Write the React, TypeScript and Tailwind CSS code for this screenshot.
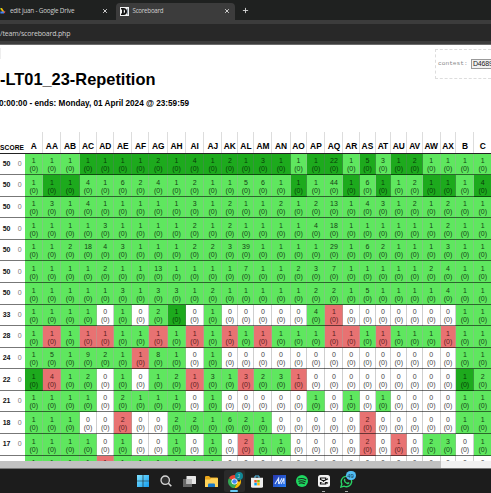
import React from "react";

const columns = "A AA AB AC AD AE AF AG AH AI AJ AK AL AM AN AO AP AQ AR AS AT AU AV AW AX B C".split(" ");

// Each entry is a try count; the prefix gives the state: d = first solved, r = wrong, w = untried.
const rows: [string, string][] = [
  ["50", "1 1 1 d1 d1 d1 d1 d2 d1 d4 d1 d2 d1 d3 d1 1 d1 d22 1 d5 3 d1 d2 1 1 1 1"],
  ["50", "1 d1 d1 4 1 6 2 4 1 2 1 1 5 6 1 d1 1 44 d1 6 d1 1 2 d1 d1 1 d4"],
  ["50", "1 3 1 4 1 1 1 1 1 3 1 2 1 1 2 1 2 13 1 4 3 1 2 1 2 1 1"],
  ["50", "1 1 1 1 3 1 1 1 1 2 1 2 1 1 1 1 4 18 1 1 1 1 1 1 2 1 1"],
  ["50", "1 1 2 18 4 3 1 1 1 2 2 3 39 1 1 1 1 29 1 6 2 1 1 1 3 1 1"],
  ["50", "1 1 1 1 2 1 1 13 1 1 1 1 7 1 1 2 3 7 1 1 1 1 1 2 4 1 1"],
  ["50", "1 1 1 1 1 3 1 3 3 1 2 1 1 1 1 1 2 2 1 5 1 1 1 1 4 1 1"],
  ["33", "1 1 1 1 w0 1 w0 2 d1 w0 1 w0 w0 w0 w0 w0 4 r1 w0 w0 w0 w0 w0 w0 w0 1 1"],
  ["28", "1 r1 1 r1 r1 1 1 r1 1 r1 1 r1 1 r1 1 1 1 r1 r1 1 r1 1 1 1 r1 1 1"],
  ["24", "1 5 1 9 2 1 r1 8 1 w0 1 w0 w0 w0 w0 w0 w0 w0 w0 w0 w0 w0 w0 w0 w0 1 1"],
  ["22", "d1 r4 1 2 w0 1 w0 1 2 r1 3 1 r3 2 3 r1 w0 w0 w0 w0 w0 w0 w0 w0 w0 d1 2"],
  ["21", "1 1 1 1 w0 2 1 1 1 w0 1 w0 w0 w0 w0 w0 1 w0 1 w0 1 w0 w0 w0 w0 1 1"],
  ["18", "1 1 1 w0 w0 r2 w0 w0 2 2 1 6 2 1 w0 w0 w0 w0 w0 r2 w0 w0 w0 w0 w0 1 1"],
  ["17", "1 1 1 1 w0 1 w0 w0 1 w0 1 w0 r2 1 1 w0 w0 w0 w0 r2 w0 r1 w0 2 3 w0 1"],
  ["16", "1 1 1 1 r1 1 1 1 1 1 1 w0 w0 w0 w0 w0 w0 w0 w0 w0 w0 w0 w0 w0 w0 w0 w0"],
];

const gridCols =
  "grid w-[492px] grid-cols-[14.3px_11px_18px_18.2px_18.2px_17.8px_16.5px_18.5px_17px_18.5px_18px_18.3px_18px_16.2px_16px_18px_18.2px_16.8px_18px_18px_16.5px_16px_15px_16.5px_15.5px_17.7px_15.8px_18px_17.7px]";

function cellTone(entry: string) {
  switch (entry[0]) {
    case "d":
      return "bg-[#1daa1d] border-[#36983a] text-[#083c08]";
    case "r":
      return "bg-[#e87272] border-[#c98b86] text-[#5a1c1c]";
    case "w":
      return "bg-white border-[#cfcfcf] text-[#444]";
    default:
      return "bg-[#5fe75f] border-[#7bce7b] text-[#153f15]";
  }
}

function ScoreRow({ score, cells }: { score: string; cells: string }) {
  return (
    <div className={`${gridCols} h-[21.59px] shrink-0 text-[7px] leading-[8px]`}>
      <div className="flex items-center justify-end border-b border-[#777] pr-[3.8px] font-bold text-[#111]">{score}</div>
      <div className="flex items-center justify-center border-b border-[#777] text-[#777]">0</div>
      {cells.split(" ").map((c, i) => (
        <div key={i} className={`border-r text-center ${cellTone(c)}`}>
          <div className="-mr-px h-[21.59px] border-b border-b-black/55 pt-[3.6px] pr-px">
            {c.replace(/[drw]/, "")}
            <br />
            (0)
          </div>
        </div>
      ))}
    </div>
  );
}

function Close() {
  return (
    <svg viewBox="0 0 8 8" className="size-[6px] shrink-0" stroke="#dedede" strokeWidth="1.2">
      <path d="M1.5 1.5 6.5 6.5M6.5 1.5 1.5 6.5" />
    </svg>
  );
}

function BrowserBar() {
  return (
    <div className="flex h-[45px] shrink-0 flex-col border-b border-[#6b6b6b] bg-[#3c3c3c] font-['Open_Sans','Noto_Sans',sans-serif] text-[#cfcfcf]">
      <div className="flex h-[20px] shrink-0 bg-[#1f2120]">
        <div className="flex w-[116px] items-center pt-px pr-[8px]">
          <svg viewBox="0 0 6 8" className="h-[7px] w-[6px] shrink-0">
            <path d="M0 1h1.8L5 6H2.7L0 2z" fill="#fbbc04" />
            <path d="M0 1h1L0 4z" fill="#34a853" />
            <path d="M0 5h5.2L4 7.5H0z" fill="#4285f4" />
            <path d="M3.5 5H6L4.6 7.5z" fill="#ea4335" />
          </svg>
          <span className="ml-[4px] flex-1 whitespace-nowrap text-[6.4px] tracking-[-0.035em]">edit juan - Google Drive</span>
          <Close />
        </div>
        <div className="mt-[3px] flex w-[119px] items-center rounded-t-[4px] bg-[#3c3c3c] pr-[5px] pb-[3px] pl-[4px]">
          <svg viewBox="0 0 9 9" className="mt-[2px] size-[9px] shrink-0">
            <rect width="9" height="9" fill="#f2f2f2" />
            <path d="M1 1h2.5a3.3 3.3 0 0 1 0 7H1V6.4h1V2.6H1zM3.8 2.6v3.8c1.7-.4 1.7-3.4 0-3.8z" fill="#111" fillRule="evenodd" />
            <path d="M7.5 1.5v6" stroke="#8794a0" />
          </svg>
          <span className="mt-[2px] ml-[3.5px] flex-1 text-[6.2px] tracking-[-0.04em]">Scoreboard</span>
          <div className="mt-[2px]"><Close /></div>
        </div>
        <svg viewBox="0 0 8 8" className="mt-[7px] ml-[7px] size-[7px]" stroke="#dedede" strokeWidth="1">
          <path d="M4 1v6M1 4h6" />
        </svg>
      </div>
      <div className="mt-[4px] flex h-[17px] shrink-0 items-center bg-[#282828] pt-px text-[7px] leading-none tracking-[-0.025em]">
        /team/scoreboard.php
      </div>
    </div>
  );
}

function Taskbar() {
  return (
    <div className="flex h-[24px] shrink-0 items-center bg-[#1c1c1c] pl-[133px]">
      <div className="flex">
        <div className="flex h-[22px] w-[20.5px] items-center justify-center">
          <svg viewBox="0 0 12 12" className="size-[12px]">
            <defs>
              <linearGradient id="win" x2="1" y2="1">
                <stop stopColor="#80e3ff" />
                <stop offset="1" stopColor="#139cf0" />
              </linearGradient>
            </defs>
            <path d="M0 0h5.7v5.7H0zM6.3 0H12v5.7H6.3zM0 6.3h5.7V12H0zM6.3 6.3H12V12H6.3z" fill="url(#win)" />
          </svg>
        </div>
        <div className="flex w-[25px] items-center justify-center">
          <svg viewBox="0 0 12 12" className="size-[12px]" fill="#303030" stroke="#d6d6d6">
            <circle cx="5.2" cy="5.2" r="4.2" strokeWidth="1.3" />
            <path d="m8.3 8.3 3 3" strokeWidth="1.6" />
          </svg>
        </div>
        <div className="flex w-[21px] items-center justify-center">
          <svg viewBox="0 0 13 11" className="h-[11px] w-[13px]">
            <rect x="0" y="3" width="9" height="8" fill="#666" />
            <rect x="3.5" y="0" width="9.5" height="8" rx=".6" fill="#e7e7e7" />
            <rect x="3.5" y="3" width="5.5" height="5" fill="#bababa" />
          </svg>
        </div>
        <div className="flex w-[23px] items-center justify-center">
          <svg viewBox="0 0 13 11" className="h-[11px] w-[13px]">
            <path d="M0 1.2Q0 0 1.2 0H4l1.5 1.5H12q1 0 1 1V11H0z" fill="#e9a51b" />
            <path d="M0 3.5h5L6 2.3h7V11H0z" fill="#ffd35a" />
            <path d="M3 11V8.5Q3 7.5 4 7.5h5q1 0 1 1V11z" fill="#1878c8" />
          </svg>
        </div>
        <div className="relative mx-[1px] flex w-[21px] items-center justify-center rounded-[2px] bg-[#2a2a2a]">
          <svg viewBox="0 0 14 14" className="size-[13px]">
            <path d="M7 7 .94 3.5A7 7 0 0 1 13.06 3.5z" fill="#ea4335" />
            <path d="M7 7 .94 3.5A7 7 0 0 0 7 14l3-5.2z" fill="#34a853" />
            <path d="M7 7h6.06V3.5A7 7 0 0 1 7 14l3-5.2z" fill="#fbbc04" />
            <circle cx="7" cy="7" r="3.3" fill="#fff" />
            <circle cx="7" cy="7" r="2.5" fill="#4285f4" />
          </svg>
          <span className="absolute top-[2px] right-[2px] flex size-[8px] items-center justify-center rounded-full bg-[#118796] text-[5px] leading-none text-[#bce9ed]">J</span>
          <span className="absolute bottom-0 h-[2px] w-[8px] rounded-full bg-[#67c9f4]" />
        </div>
        <div className="flex w-[22px] items-center justify-center">
          <svg viewBox="0 0 12 13" className="h-[13px] w-[12px]">
            <path d="M4 3V1h4v2" fill="none" stroke="#5ac7f5" />
            <path d="M0 2.7h12v8.5q0 1.5-1.5 1.5h-9Q0 12.7 0 11.2z" fill="#eee" />
            <path d="M3.3 5h2.5v2.5H3.3z" fill="#f25022" />
            <path d="M6.2 5h2.5v2.5H6.2z" fill="#7fba00" />
            <path d="M3.3 7.9h2.5v2.5H3.3z" fill="#00a4ef" />
            <path d="M6.2 7.9h2.5v2.5H6.2z" fill="#ffb900" />
          </svg>
        </div>
        <div className="flex w-[23px] items-center justify-center">
          <svg viewBox="0 0 13 12" className="h-[12px] w-[13px]">
            <defs>
              <linearGradient id="editor" x2="1" y2="1">
                <stop stopColor="#2937ad" />
                <stop offset="1" stopColor="#237bf2" />
              </linearGradient>
            </defs>
            <path d="M0 0h13v12H0z" fill="url(#editor)" />
            <path d="M2 9 5.6 3.2V9M6 9l3-5.8M8 9l3-5.8V9" fill="none" stroke="#dceaff" strokeWidth="1.1" />
          </svg>
        </div>
        <div className="flex w-[22px] items-center justify-center">
          <svg viewBox="0 0 12 12" className="size-[12px]">
            <circle cx="6" cy="6" r="6" fill="#1ed760" />
            <path d="M2.4 4q4-1.2 7.4.7M2.8 6.2q3.4-1 6.3.6M3.2 8.2q2.8-.8 5.2.5" fill="none" stroke="#182b1e" strokeWidth="1.1" strokeLinecap="round" />
          </svg>
        </div>
        <div className="relative flex w-[22px] items-center justify-center">
          <svg viewBox="0 0 12 12" className="size-[12px]">
            <rect width="12" height="12" rx="2.5" fill="#f3f3f3" />
            <path d="M7.7 4.5V3H2.5v1.5L10 8.3M7.7 7.5V9H2.5V7.5L10 3.7" fill="none" stroke="#111" strokeWidth="1.2" />
          </svg>
          <span className="absolute bottom-0 h-px w-[3px] bg-[#aaa]" />
        </div>
        <div className="relative flex w-[23px] items-center justify-center">
          <svg viewBox="0 0 14 14" className="mt-[1px] size-[13px]">
            <path d="m1 13 1-3.3A5.6 5.6 0 1 1 4.3 12z" fill="#1c1c1c" stroke="#29d366" strokeWidth="1.5" />
            <path d="M4.3 4.5c.7-1 1.3-.2 1.7.8l-.5.8q.8 1.5 2.3 2.2l.8-.8 1.7.9c-.2 1.5-1.4 1.7-2.8 1.2Q4.4 8.4 4 6z" fill="#29d366" />
          </svg>
          <span className="absolute top-[1px] right-[2px] flex h-[9px] w-[10px] items-center justify-center rounded-full bg-[#52bdf3] text-[6px] leading-none text-[#123a50]">49</span>
          <span className="absolute bottom-0 h-px w-[3px] bg-[#aaa]" />
        </div>
      </div>
    </div>
  );
}

export default function App() {
  return (
    <div className="flex h-[493px] w-[491px] flex-col overflow-hidden bg-white font-['Liberation_Sans',Arial,sans-serif] text-black">
      <BrowserBar />
      <main className="flex h-[415.5px] shrink-0 flex-col overflow-hidden">
        <div className="flex h-[86.5px] shrink-0 justify-between">
          <div className="whitespace-nowrap">
            <div className="mt-[3px] h-[11px] w-px bg-[#eee]" />
            <h1 className="mt-[11px] text-[16.4px] leading-[18px] font-bold">-LT01_23-Repetition</h1>
            <p className="-ml-[1px] mt-[11px] text-[8.2px] leading-[10px] font-bold">0:00:00 - ends: Monday, 01 April 2024 @ 23:59:59</p>
          </div>
          <div className="mt-[4px] flex h-[30px] w-[56px] items-center border border-r-0 border-dashed border-[#ddd] pl-[2px] whitespace-nowrap">
            <span className="w-[30px] shrink-0 font-['Liberation_Mono',monospace] text-[6.2px] text-[#888]">contest:</span>
            <span className="ml-[3px] h-[10px] w-[20px] shrink-0 border border-r-0 border-[#999] bg-[#f1f1f1] pl-px text-[7px] leading-[8px] tracking-[-0.03em] text-[#222]">D4689</span>
          </div>
        </div>
        <div className={`${gridCols} h-[22px] shrink-0 border-b border-[#222] font-bold`}>
          <div className="col-span-2 flex items-end pb-[0.5px] text-[6.6px] leading-[8px] tracking-[0.02em]">SCORE</div>
          {columns.map((name) => (
            <div key={name} className="flex items-end justify-center border-r border-[#ddd] pb-[2px] text-[8.4px] leading-[10px]">{name}</div>
          ))}
        </div>
        {rows.map(([score, cells], i) => (
          <ScoreRow key={i} score={score} cells={cells} />
        ))}
      </main>
      <div className="h-[7.5px] shrink-0 bg-[#f1f1f1]">
        <div className="h-full w-[441px] bg-[#c1c1c1]" />
      </div>
      <div className="h-px shrink-0 bg-[#777]" />
      <Taskbar />
    </div>
  );
}
